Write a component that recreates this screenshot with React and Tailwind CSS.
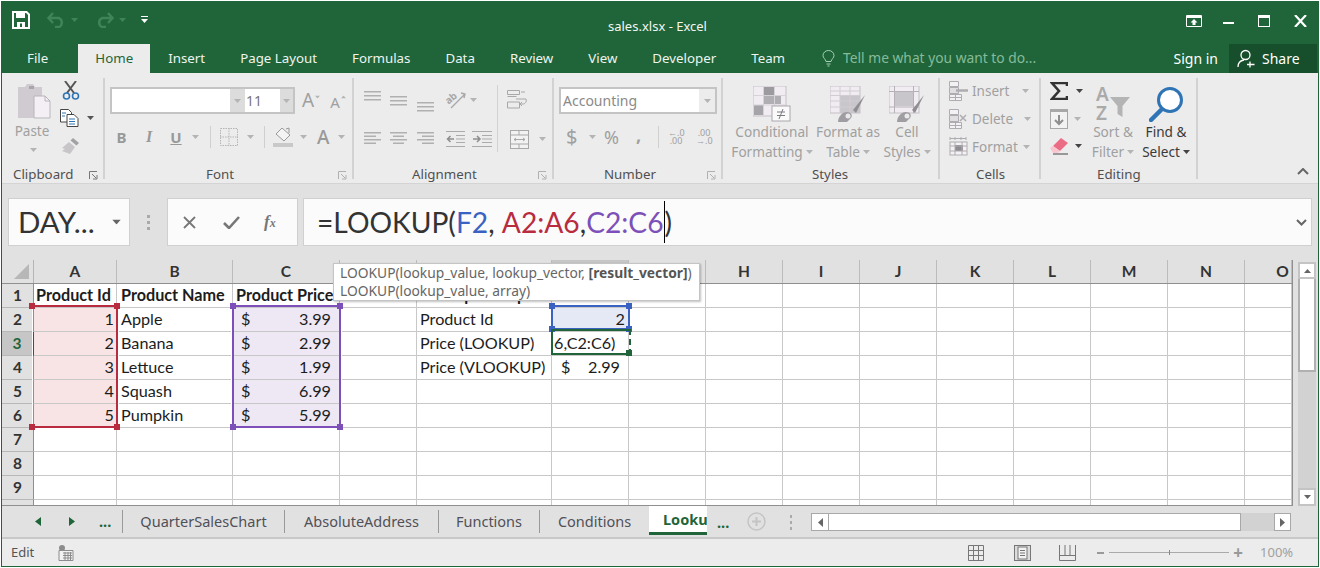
import React from "react";

const UI = { fontFamily: '"Noto Sans", "Open Sans", sans-serif' };
const SHEET = { fontFamily: 'Lato, "Liberation Sans", sans-serif' };

const ribbonTabs = ["Insert", "Page Layout", "Formulas", "Data", "Review", "View", "Developer", "Team"];
const columns = ["A", "B", "C", "D", "E", "F", "G", "H", "I", "J", "K", "L", "M", "N", "O"];
const gridCols = "grid grid-cols-[32px_83px_116px_107px_77px_135px_77px_77px_77px_77px_77px_77px_77px_77px_77px_47px]";

const products = [
  ["1", "Apple", "3.99"],
  ["2", "Banana", "2.99"],
  ["3", "Lettuce", "1.99"],
  ["4", "Squash", "6.99"],
  ["5", "Pumpkin", "5.99"],
];

function Caret({ color = "#b4b4b4", className = "" }) {
  return (
    <svg width="7" height="4" viewBox="0 0 7 4" className={className}>
      <path d="M0 0h7L3.500 4z" fill={color} />
    </svg>
  );
}

function Launcher({ dark }) {
  const c = dark ? "#777" : "#b0b0b0";
  return (
    <svg width="9" height="9" viewBox="0 0 9 9">
      <path d="M.5 8V.5H8" fill="none" stroke={c} />
      <path d="M3 3l4 4M8 4v4H4" fill="none" stroke={c} />
    </svg>
  );
}

function Lines({ w = 18, widths = [18, 18, 18], gap = 4, align = "left", color = "#a6a6a6" }) {
  return (
    <svg width={w} height={widths.length * gap + 2} viewBox={`0 0 ${w} ${widths.length * gap + 2}`}>
      {widths.map((lw, i) => {
        const x = align === "left" ? 0 : align === "right" ? w - lw : (w - lw) / 2;
        return <rect key={i} x={x} y={i * gap + 1} width={lw} height="1.500" fill={color} />;
      })}
    </svg>
  );
}

function Group({ width, label, labelClass, launcher, launcherDark, children }) {
  return (
    <div className={`flex shrink-0 ${width}`}>
      <div className="flex-1 min-w-0 flex flex-col">
        <div className="h-[89px] shrink-0">{children}</div>
        <div className={`h-[16px] shrink-0 flex items-center text-[13.300px] text-[#505050] ${labelClass}`}>
          <span>{label}</span>
          {launcher && (
            <span className="ml-auto mr-[5px] flex">
              <Launcher dark={launcherDark} />
            </span>
          )}
        </div>
      </div>
      <div className="w-[2px] h-[101px] bg-[#d2d2d2]" />
    </div>
  );
}

function BigButton({ width, icon, line1, line2, dark, caret = true }) {
  const color = dark ? "text-[#3a3a3a]" : "text-[#a0a0a0]";
  return (
    <div className={`${width} shrink-0 flex flex-col items-center`}>
      <div className="h-[42px] mt-[5px] flex items-center">{icon}</div>
      <div className={`text-[13.600px] leading-[20px] mt-[-3px] whitespace-nowrap ${color}`}>{line1}</div>
      <div className={`text-[13.600px] leading-[20px] whitespace-nowrap flex items-center gap-[3px] ${color}`}>
        {line2}
        {caret && <Caret color={dark ? "#444" : "#b4b4b4"} />}
      </div>
    </div>
  );
}

function CondFormatIcon() {
  return (
    <svg width="38" height="36" viewBox="0 0 38 36">
      <rect x="0" y="0" width="33" height="30" fill="#f1ecf2" stroke="#c4c0c6" />
      <rect x="10" y="1" width="11" height="8" fill="#9c9a9e" />
      <rect x="10" y="10" width="18" height="8" fill="#b0aeb2" />
      <rect x="1" y="19" width="10" height="10" fill="#a6a4a8" />
      <path d="M0 9.500h33M0 19h33M10.500 0v30M21.500 0v30" stroke="#d6d2d8" />
      <rect x="19" y="20" width="18" height="15" fill="#fbfafb" stroke="#a9a6ab" />
      <path d="M24 26h8M24 29.500h8M30 23l-4 10" stroke="#7c7a7e" fill="none" />
    </svg>
  );
}

function FormatTableIcon({ plain }) {
  return (
    <svg width="36" height="36" viewBox="0 0 36 36">
      <rect x="0" y="0" width="30" height="27" fill="#f1ecf2" stroke="#c4c0c6" />
      {plain ? (
        <>
          <rect x="6" y="6" width="18" height="14" fill="#c9c6cb" />
          <path d="M0 5.500h30M0 21h30M5.500 0v27M24.500 0v27" stroke="#b5b2b7" />
        </>
      ) : (
        <>
          <rect x="10" y="9" width="20" height="18" fill="#c9c6cb" />
          <path d="M0 5h30M0 9.500h30M0 15h30M0 21h30M10 0v27M20 0v27" stroke="#d0ccd2" />
        </>
      )}
      <path d="M35 9l-12 15 3 3z" fill="#8f8d91" />
      <path d="M8 36c0-5 4-10 9-10 4 0 6 3 4 6l-4 4z" fill="#9f9da1" />
      <circle cx="18" cy="30" r="2.500" fill="#e9e8ea" />
    </svg>
  );
}

function MiniTableIcon({ kind }) {
  return (
    <svg width="20" height="20" viewBox="0 0 20 20">
      <path d="M.5.500h9v5h-9zM.5 13.500h12v6h-12zM6.500 13.500v6M.5 16.500h12" fill="#f3f1f3" stroke="#aeacb0" />
      <path d="M.5 6.500h9v6h-9z" fill="#e0dee1" stroke="#aeacb0" />
      {kind === "insert" && <path d="M7 9.500h12" stroke="#aeacb0" strokeWidth="2.500" />}
      {kind === "delete" && <path d="M11 6l6 6M17 6l-6 6" stroke="#aeacb0" strokeWidth="1.500" />}
    </svg>
  );
}

function FormatCellsIcon() {
  return (
    <svg width="20" height="20" viewBox="0 0 20 20">
      <path d="M1 1.500h16M1 0v3M17 0v3M6 0v3M12 0v3" stroke="#aeacb0" fill="none" />
      <rect x="1" y="5" width="17" height="13" fill="#f3f1f3" stroke="#aeacb0" />
      <rect x="6" y="8" width="8" height="6" fill="#8e8c90" />
      <path d="M1 9h17M1 14h17M6 5v13M13 5v13" stroke="#aeacb0" />
    </svg>
  );
}

function TitleBar() {
  return (
    <div className="h-[42px] flex bg-[#1f6539] relative">
      <div className="flex items-start pt-[9px]">
        <svg width="18" height="18" viewBox="0 0 18 18" className="ml-[10px]">
          <path d="M1 1h13.500L17 3.500V17H1z" fill="none" stroke="#fff" strokeWidth="2" />
          <rect x="4" y="1" width="9" height="6" fill="#fff" />
          <rect x="5" y="11" width="8" height="6" fill="#fff" />
          <rect x="8" y="12.500" width="2" height="3.500" fill="#1f6539" />
        </svg>
        <svg width="19" height="16" viewBox="0 0 19 16" className="ml-[17px] mt-[1px]">
          <path d="M2 6h10a5 5 0 0 1 0 9H8M6 1L1.500 6 6 11" fill="none" stroke="#3f8359" strokeWidth="2.500" />
        </svg>
        <Caret color="#3f8359" className="ml-[5px] mt-[7px]" />
        <svg width="19" height="16" viewBox="0 0 19 16" className="ml-[17px] mt-[1px]">
          <path d="M17 6H7a5 5 0 0 0 0 9h4M13 1l4.500 5L13 11" fill="none" stroke="#3f8359" strokeWidth="2.500" />
        </svg>
        <Caret color="#3f8359" className="ml-[5px] mt-[7px]" />
        <svg width="7" height="7" viewBox="0 0 7 7" className="ml-[15px] mt-[5px]">
          <path d="M0 .500h7" stroke="#fff" />
          <path d="M0 3h7L3.500 7z" fill="#fff" />
        </svg>
      </div>
      <div className="absolute left-[606px] top-[14px] text-[13px] leading-[20px] text-[#f2f6f3]" style={UI}>
        sales.xlsx - Excel
      </div>
      <div className="ml-auto flex items-start pt-[13px] pr-[11px]">
        <svg width="16" height="12" viewBox="0 0 16 12">
          <path d="M.500 .500h15v11H.500z" fill="none" stroke="#fff" />
          <path d="M1 1h14v2H1zM8 4l3.500 3.500H9.500V10h-3V7.500H4.500z" fill="#fff" />
        </svg>
        <div className="w-[11px] h-[2px] bg-white ml-[21px] mt-[7px]" />
        <div className="w-[12px] h-[12px] border border-white border-t-[3px] ml-[24px]" />
        <svg width="13" height="12" viewBox="0 0 13 12" className="ml-[24px]">
          <path d="M1 0l11 12M12 0L1 12" stroke="#fff" strokeWidth="2.200" />
        </svg>
      </div>
    </div>
  );
}

function TabRow() {
  return (
    <div className="h-[29px] flex items-stretch bg-[#1f6539] text-[13.300px] text-[#eef4f0]" style={UI}>
      <div className="ml-[25px] mr-[30px] flex items-center">File</div>
      <div className="w-[72px] bg-[#ececec] text-[#1f6539] flex items-center justify-center">Home</div>
      <div className="flex ml-[18px] gap-[35px]">
        {ribbonTabs.map((t) => (
          <div key={t} className="flex items-center">{t}</div>
        ))}
      </div>
      <div className="flex items-center ml-[37px] text-[#86bb9a] text-[13.800px]">
        <svg width="13" height="17" viewBox="0 0 13 17" className="mr-[8px]">
          <path d="M4 11.500C3.500 9 1 8 1 5.500a5.500 5 0 0 1 11 0c0 2.500-2.500 3.500-3 6zM4.500 14h4M5.500 16h2" fill="none" stroke="#a9d0b8" />
        </svg>
        Tell me what you want to do...
      </div>
      <div className="ml-auto flex items-stretch">
        <div className="flex items-center mr-[11px] text-white text-[14px]">Sign in</div>
        <div className="w-[88px] bg-[#174f2c] flex items-center pl-[8px] text-white mr-px text-[14px]">
          <svg width="19" height="19" viewBox="0 0 19 19" className="mr-[6px]">
            <circle cx="8.500" cy="6" r="4.500" fill="none" stroke="#fff" strokeWidth="1.300" />
            <path d="M1 18c0-4 2.500-6.500 6-7M13 12.500v6M10 15.500h7.500" fill="none" stroke="#fff" strokeWidth="1.300" />
          </svg>
          Share
        </div>
      </div>
    </div>
  );
}

function Ribbon() {
  return (
    <div className="h-[111px] bg-[#ececec] flex pt-[5px] border-b border-[#d4d4d4]" style={UI}>
      <Group width="w-[103px]" label="Clipboard" labelClass="pl-[11px]" launcher launcherDark>
        <div className="flex">
          <div className="ml-[13px] w-[37px] flex flex-col items-center">
            <svg width="34" height="36" viewBox="0 0 34 36" className="mt-[5px]">
              <path d="M1 4h7l2-3h6l2 3h7v31H1z" fill="#cfcbd0" />
              <rect x="12" y="3" width="5" height="3" fill="#a9a6ab" />
              <path d="M17 13h11l5 5v17H17z" fill="#f4eff5" stroke="#b8b5ba" />
              <path d="M28 13v5h5" fill="none" stroke="#b8b5ba" />
            </svg>
            <div className="text-[13.500px] leading-[20px] text-[#a0a0a0] mt-[2px] -ml-[3px]">Paste</div>
            <Caret className="mt-[7px]" />
          </div>
          <div className="ml-[8px] flex flex-col">
            <svg width="18" height="19" viewBox="0 0 18 19" className="mt-[3px] ml-[2px]">
              <path d="M3 0l9 12M14 0L5 12" stroke="#555" strokeWidth="2" />
              <circle cx="4.500" cy="15" r="3" fill="none" stroke="#2f75b5" strokeWidth="1.600" />
              <circle cx="13.500" cy="15" r="3" fill="none" stroke="#2f75b5" strokeWidth="1.600" />
            </svg>
            <div className="flex items-center mt-[9px]">
              <svg width="19" height="18" viewBox="0 0 19 18">
                <path d="M.500 .500h8l3 3V13H.500z" fill="#fff" stroke="#444" />
                <path d="M7 5.500h7l4 4v8H7z" fill="#fff" stroke="#444" />
                <path d="M2 4h4M2 7h3M9 10h6M9 12.500h6M9 15h6" stroke="#2f75b5" />
              </svg>
              <Caret color="#555" className="ml-[8px]" />
            </div>
            <svg width="19" height="18" viewBox="0 0 19 18" className="mt-[10px] ml-[1px]">
              <path d="M12 1l6 5-2.500 2.500-6-5z" fill="#a4a1a5" />
              <path d="M8 5l6 5-5 7-8-3 3-2-3-1z" fill="#c8c5c9" />
            </svg>
          </div>
        </div>
      </Group>

      <Group width="w-[249px]" label="Font" labelClass="pl-[101px]" launcher>
        <div className="flex mt-[9px] items-stretch">
          <div className="ml-[5px] w-[185px] h-[27px] border-2 border-[#c4c4c4] flex text-[14px]">
            <div className="w-[118px] bg-white" />
            <div className="w-[15px] bg-[#dcdcdc] flex items-center justify-center"><Caret /></div>
            <div className="w-[35px] bg-white text-[#777] pl-[1px] leading-[23px]">11</div>
            <div className="flex-1 bg-[#dcdcdc] flex items-center justify-center"><Caret /></div>
          </div>
          <div className="ml-[7px] flex items-center">
            <span className="text-[19px] text-[#a0a0a0] leading-none">A</span>
            <Caret className="mb-[8px] scale-75" />
            <span className="text-[15px] text-[#a0a0a0] leading-none ml-[9px] mt-[3px]">A</span>
            <Caret className="mb-[8px] rotate-180 scale-75" />
          </div>
        </div>
        <div className="flex items-center h-[22px] mt-[12px] ml-[3px] text-[#999]">
          <div className="w-[27px] text-center text-[15px] font-bold">B</div>
          <div className="w-[28px] text-center text-[16px] font-bold italic" style={{ fontFamily: '"Liberation Serif", serif' }}>I</div>
          <div className="w-[26px] text-center text-[15px] font-bold underline">U</div>
          <div className="w-[12px] flex justify-center"><Caret /></div>
          <div className="w-[1px] h-[22px] bg-[#cfcfcf] ml-[9px]" />
          <svg width="18" height="18" viewBox="0 0 18 18" className="ml-[9px]">
            <rect x=".5" y=".5" width="17" height="17" fill="none" stroke="#b5b5b5" strokeDasharray="1.500 1" />
            <path d="M9 0v18M0 9h18" stroke="#b5b5b5" strokeDasharray="1.500 1" />
          </svg>
          <Caret className="ml-[9px]" />
          <div className="w-[1px] h-[22px] bg-[#cfcfcf] ml-[10px]" />
          <svg width="20" height="20" viewBox="0 0 20 20" className="ml-[8px]">
            <path d="M9 1l8 7-6 6-8-7z" fill="#f4f4f4" stroke="#999" />
            <path d="M13 2l3-1v5" fill="none" stroke="#999" />
            <rect x="0" y="16" width="20" height="4" fill="#c9c9c9" />
          </svg>
          <Caret className="ml-[7px]" />
          <div className="ml-[10px] text-[19px] leading-none font-medium">A</div>
          <Caret className="ml-[9px]" />
        </div>
      </Group>

      <Group width="w-[200px]" label="Alignment" labelClass="pl-[58px]" launcher>
        <div className="flex h-[42px]">
          <div className="ml-[10px] mt-[12px]"><Lines widths={[17, 17, 17]} gap={4} color="#b0b0b0" w={17} /></div>
          <div className="ml-[9px] mt-[17px]"><Lines widths={[17, 17, 17]} gap={4} color="#b0b0b0" w={17} /></div>
          <div className="ml-[10px] mt-[23px]"><Lines widths={[17, 17, 17]} gap={4} color="#b0b0b0" w={17} /></div>
          <svg width="20" height="19" viewBox="0 0 20 19" className="ml-[12px] mt-[12px] overflow-visible">
            <path d="M5 18L19 4M15 3l4 1-1 4" fill="none" stroke="#a8a8a8" strokeWidth="1.400" />
            <text x="0" y="12" fontSize="10" fontWeight="700" fill="#a8a8a8" transform="rotate(-40 5 10)">ab</text>
          </svg>
          <Caret className="ml-[4px] mt-[20px]" />
          <div className="w-[1px] h-[67px] bg-[#d2d2d2] ml-[20px] mt-[7px]" />
          <svg width="20" height="19" viewBox="0 0 20 19" className="ml-[9px] mt-[12px]">
            <path d="M.5 .5h12v4H.5zM.5 12h12v6H.5zM.5 6.500h9" fill="none" stroke="#a8a8a8" />
            <path d="M14 2h4M9 9h10c1 3-1 5-3 5h-2M15 12l-2 2 2 2" fill="none" stroke="#a8a8a8" />
          </svg>
        </div>
        <div className="flex items-center mt-[8px] h-[22px]">
          <div className="ml-[10px]"><Lines widths={[17, 12, 17, 12]} gap={3.500} w={17} color="#b0b0b0" /></div>
          <div className="ml-[9px]"><Lines widths={[17, 11, 17, 11]} gap={3.500} w={17} align="center" color="#b0b0b0" /></div>
          <div className="ml-[10px]"><Lines widths={[17, 12, 17, 12]} gap={3.500} w={17} align="right" color="#b0b0b0" /></div>
          <svg width="19" height="16" viewBox="0 0 19 16" className="ml-[12px]">
            <path d="M0 .5h19M0 15.500h19M10 4.500h9M10 8h9M10 11.500h9" stroke="#ababab" />
            <path d="M8 8H2M4.500 5L1.500 8l3 3" fill="none" stroke="#8e8e8e" strokeWidth="1.500" />
          </svg>
          <svg width="20" height="16" viewBox="0 0 20 16" className="ml-[7px]">
            <path d="M0 .5h20M0 15.500h20M10 4.500h10M10 8h10M10 11.500h10" stroke="#ababab" />
            <path d="M1 8h6M5 5l3 3-3 3" fill="none" stroke="#8e8e8e" strokeWidth="1.500" />
          </svg>
          <svg width="19" height="19" viewBox="0 0 19 19" className="ml-[18px]">
            <rect x=".5" y=".5" width="18" height="18" fill="#f2f2f2" stroke="#a8a8a8" />
            <path d="M0 5h19M0 14h19M9 0v5M9 14v5" stroke="#a8a8a8" />
            <path d="M4 9.500h11M6 8l-2 1.500L6 11M13 8l2 1.500-2 1.500" fill="none" stroke="#a8a8a8" />
          </svg>
          <Caret className="ml-[10px]" />
        </div>
      </Group>

      <Group width="w-[169px]" label="Number" labelClass="pl-[50px]" launcher>
        <div className="ml-[5px] mt-[9px] w-[158px] h-[27px] border-2 border-[#c4c4c4] bg-white flex text-[14px]">
          <div className="flex-1 text-[#8a8a8a] pl-[2px] leading-[23px]">Accounting</div>
          <div className="w-[16px] bg-[#ececec] flex items-center justify-center"><Caret /></div>
        </div>
        <div className="flex items-center h-[22px] mt-[12px] text-[#a0a0a0]">
          <div className="ml-[12px] w-[11px] text-[20px] leading-none">$</div>
          <Caret className="ml-[12px]" />
          <div className="ml-[8px] w-[17px] text-[18px] leading-none">%</div>
          <div className="ml-[15px] w-[5px] text-[18px] font-bold leading-none mb-[4px]">,</div>
          <div className="w-[1px] h-[22px] bg-[#cfcfcf] ml-[17px]" />
          <div className="ml-[9px] w-[16px] text-[9px] leading-[8px] text-center whitespace-nowrap">←.0<br />.00</div>
          <div className="ml-[12px] w-[16px] text-[9px] leading-[8px] text-center whitespace-nowrap">.00<br />→.0</div>
        </div>
      </Group>

      <Group width="w-[217px]" label="Styles" labelClass="pl-[89px]">
        <div className="flex pl-[6px]">
          <BigButton width="w-[86px]" icon={<CondFormatIcon />} line1="Conditional" line2="Formatting" />
          <BigButton width="w-[66px]" icon={<FormatTableIcon />} line1="Format as" line2="Table" />
          <BigButton width="w-[52px]" icon={<FormatTableIcon plain />} line1="Cell" line2="Styles" />
        </div>
      </Group>

      <Group width="w-[101px]" label="Cells" labelClass="pl-[36px]">
        <div className="flex flex-col pl-[9px] -mt-px text-[13.500px] text-[#a0a0a0]">
          <div className="h-[28px] flex items-center">
            <MiniTableIcon kind="insert" />
            <span className="ml-[3px]">Insert</span>
            <Caret className="ml-[13px]" />
          </div>
          <div className="h-[28px] flex items-center">
            <MiniTableIcon kind="delete" />
            <span className="ml-[3px]">Delete</span>
            <Caret className="ml-[11px]" />
          </div>
          <div className="h-[28px] flex items-center">
            <FormatCellsIcon />
            <span className="ml-[3px]">Format</span>
            <Caret className="ml-[5px]" />
          </div>
        </div>
      </Group>

      <Group width="w-[157px]" label="Editing" labelClass="pl-[56px]">
        <div className="flex">
          <div className="ml-[9px] flex flex-col">
            <div className="flex items-center mt-[3px] h-[20px]">
              <svg width="18" height="18" viewBox="0 0 18 18">
                <path d="M17 4V1H2l7 8-7 8h15v-3" fill="none" stroke="#333" strokeWidth="2.600" />
              </svg>
              <Caret color="#444" className="ml-[8px]" />
            </div>
            <div className="flex items-center mt-[7px] h-[21px]">
              <svg width="18" height="20" viewBox="0 0 18 20">
                <rect x=".5" y=".5" width="17" height="19" fill="#f2f2f2" stroke="#a8a8a8" />
                <rect x="0" y="0" width="18" height="3" fill="#a8a8a8" />
                <path d="M9 6v9M5 11l4 4 4-4" fill="none" stroke="#8e8e8e" strokeWidth="2" />
              </svg>
              <Caret className="ml-[6px]" />
            </div>
            <div className="flex items-center mt-[8px] h-[18px]">
              <svg width="19" height="17" viewBox="0 0 19 17">
                <path d="M11 0l7 5-8 8-7-5z" fill="#eb6d85" />
                <path d="M0 10l3-2 7 5-2 2H3z" fill="#f7c6cf" />
                <path d="M3 16h15" stroke="#444" />
              </svg>
              <Caret color="#444" className="ml-[6px]" />
            </div>
          </div>
          <BigButton
            width="w-[56px] ml-[2px]"
            icon={
              <svg width="36" height="36" viewBox="0 0 36 36" className="overflow-visible">
                <text x="1" y="15" fontSize="19" fontWeight="600" fill="#aaa">A</text>
                <text x="1" y="34" fontSize="19" fontWeight="600" fill="#aaa">Z</text>
                <path d="M15 11h20l-7.500 9v11l-5-3v-8z" fill="#b4b4b4" />
              </svg>
            }
            line1="Sort &"
            line2="Filter"
          />
          <BigButton
            width="w-[50px]"
            dark
            icon={
              <svg width="35" height="36" viewBox="0 0 35 36">
                <circle cx="21" cy="14" r="11.500" fill="#fff" stroke="#2f75b5" strokeWidth="3" />
                <path d="M12 24L2 34" stroke="#2f75b5" strokeWidth="4.500" strokeLinecap="round" />
              </svg>
            }
            line1="Find &"
            line2="Select"
          />
        </div>
      </Group>

      <div className="flex-1 flex justify-end items-end pr-[9px] pb-[8px]">
        <svg width="12" height="7" viewBox="0 0 12 7">
          <path d="M1 6l5-5 5 5" fill="none" stroke="#666" strokeWidth="2" />
        </svg>
      </div>
    </div>
  );
}

function FormulaBar() {
  return (
    <div className="h-[76px] bg-[#e1e1e1] flex pt-[14px] pl-[6px] pr-[6px]">
      <div className="w-[122px] h-[48px] bg-[#fbfbfb] border-[1.500px] border-[#d0d0d0] flex items-center pl-[9px] text-[29.500px] text-[#333]" style={SHEET}>
        DAY...
        <Caret color="#666" className="ml-auto mr-[9px] scale-125" />
      </div>
      <div className="w-[37px] h-[48px] flex flex-col items-center justify-center gap-[3px]">
        <div className="w-[3px] h-[3px] bg-[#aaa]" />
        <div className="w-[3px] h-[3px] bg-[#aaa]" />
        <div className="w-[3px] h-[3px] bg-[#aaa]" />
      </div>
      <div className="w-[131px] h-[48px] bg-[#fbfbfb] border-[1.500px] border-[#d0d0d0] flex items-center pl-[15px]">
        <svg width="13" height="13" viewBox="0 0 13 13">
          <path d="M1 1l11 11M12 1L1 12" stroke="#777" strokeWidth="1.800" />
        </svg>
        <svg width="17" height="13" viewBox="0 0 17 13" className="ml-[27px]">
          <path d="M1 7l5 5L16 1" fill="none" stroke="#777" strokeWidth="2.600" />
        </svg>
        <span className="ml-[24px] text-[17px] font-bold italic text-[#777]" style={{ fontFamily: '"Liberation Serif", serif' }}>
          f<span className="text-[12px]">x</span>
        </span>
      </div>
      <div className="ml-[5px] flex-1 h-[48px] bg-[#fbfbfb] border-[1.500px] border-[#d0d0d0] flex items-center pl-[13px] text-[28.200px] text-[#333] whitespace-nowrap" style={SHEET}>
        <span>=LOOKUP(</span>
        <span className="text-[#3a62c2]">F2</span>
        <span>,&nbsp;</span>
        <span className="text-[#b92b3e]">A2:A6</span>
        <span>,</span>
        <span className="text-[#7c50b8]">C2:C6</span>
        <span className="inline-block w-px h-[42px] bg-black" />
        <span>)</span>
        <svg width="11" height="7" viewBox="0 0 11 7" className="ml-auto mr-[4px]">
          <path d="M1 1l4.500 4.500L10 1" fill="none" stroke="#666" strokeWidth="2" />
        </svg>
      </div>
    </div>
  );
}

function Cell({ className = "", children }) {
  return (
    <div className={`h-[24px] border-r border-b border-[#c8c8c8] flex items-center whitespace-nowrap overflow-hidden text-[16.200px] text-[#1c1c1c] ${className}`}>
      {children}
    </div>
  );
}

function RowHead({ n, active }) {
  return (
    <div className={`h-[24px] border-b border-r border-b-[#b8b8b8] flex items-center justify-center font-bold text-[15.500px] ${active ? "bg-[#c6c6c6] text-[#1f6539] border-r-2 border-r-[#1f6539]" : "bg-[#e1e1e1] text-[#333] border-r-[#8f8f8f]"}`}>
      {n}
    </div>
  );
}

function Money({ value }) {
  return (
    <div className="w-full flex justify-between pl-[8px] pr-[8px]">
      <span>$</span>
      <span>{value}</span>
    </div>
  );
}

function Handle({ color, className }) {
  return <div className={`absolute w-[6px] h-[6px] ${className}`} style={{ backgroundColor: color }} />;
}

function Range({ className, color }) {
  return (
    <div className={`absolute border-2 shadow-[0_0_0_1px_#fff] ${className}`} style={{ borderColor: color }}>
      <Handle color={color} className="-left-[4px] -top-[4px]" />
      <Handle color={color} className="-right-[4px] -top-[4px]" />
      <Handle color={color} className="-left-[4px] -bottom-[4px]" />
      <Handle color={color} className="-right-[4px] -bottom-[4px]" />
    </div>
  );
}

function Grid() {
  const rows = [1, 2, 3, 4, 5, 6, 7, 8, 9, 10];
  return (
    <div className="h-[246px] bg-[#e1e1e1] flex" style={SHEET}>
      <div className="w-[1291px] relative overflow-hidden border-r border-b border-[#8f8f8f]">
        <div className={`${gridCols} h-[24px] border-b border-[#8f8f8f]`}>
          <div className="border-r border-[#b5b5b5] flex items-end justify-end pr-[4px] pb-[4px]">
            <svg width="15" height="15" viewBox="0 0 15 15"><path d="M15 0v15H0z" fill="#b7b7b7" /></svg>
          </div>
          {columns.map((c) => (
            <div
              key={c}
              className={`border-r border-[#bcbcbc] flex items-center justify-center font-bold text-[15.500px] text-[#333] ${c === "F" ? "bg-[#c6c6c6]" : ""} ${c === "O" ? "pl-[29px]" : ""}`}
            >
              {c}
            </div>
          ))}
        </div>
        {rows.map((r) => {
          const p = products[r - 2];
          return (
            <div key={r} className={gridCols}>
              <RowHead n={r < 10 ? r : ""} active={r === 3} />
              <Cell className={`${p ? "bg-[#f8e4e4]" : "bg-white"} ${r === 1 ? "font-bold pl-[2px]" : "justify-end pr-[2px]"}`}>
                {r === 1 ? "Product Id" : p && p[0]}
              </Cell>
              <Cell className={`bg-white pl-[4px] ${r === 1 ? "font-bold" : ""}`}>
                {r === 1 ? "Product Name" : p && p[1]}
              </Cell>
              <Cell className={`${p ? "bg-[#eee8f5]" : "bg-white"} ${r === 1 ? "font-bold pl-[3px]" : ""}`}>
                {r === 1 ? "Product Price" : p && <Money value={p[2]} />}
              </Cell>
              <Cell className="bg-white" />
              <Cell className={`bg-white pl-[3px] ${r === 1 ? "font-bold" : ""}`}>
                {r === 1 && "Lookup Example"}
                {r === 2 && "Product Id"}
                {r === 3 && "Price (LOOKUP)"}
                {r === 4 && "Price (VLOOKUP)"}
              </Cell>
              <Cell className={`${r === 2 ? "bg-[#e4e9f5] justify-end pr-[3px]" : "bg-white"} ${r === 3 ? "pl-[2px]" : ""}`}>
                {r === 2 && "2"}
                {r === 3 && "6,C2:C6)"}
                {r === 4 && (
                  <div className="w-full flex justify-between pl-[9px] pr-[8px]">
                    <span>$</span>
                    <span>2.99</span>
                  </div>
                )}
              </Cell>
              {columns.slice(6).map((c) => (
                <Cell key={c} className="bg-white" />
              ))}
            </div>
          );
        })}

        <Range className="left-[31px] top-[45px] w-[85px] h-[123px] border-l-0" color="#b92b3e" />
        <Range className="left-[230px] top-[45px] w-[109px] h-[123px]" color="#7c50b8" />
        <Range className="left-[549px] top-[45px] w-[79px] h-[25px]" color="#3a62c2" />
        <div className="absolute left-[549px] top-[69px] w-[80px] h-[26px] border-2 border-t-[#1f6539] border-[#1f6539] [border-right-style:dashed]">
          <div className="absolute -right-[3px] -bottom-[3px] w-[6px] h-[6px] bg-[#1f6539]" />
        </div>

        <div className="absolute left-[331px] top-[3px] w-[367px] h-[38px] bg-white border border-[#c4c4c4] shadow-[1px_1px_2px_rgba(0,0,0,0.25)] pl-[6px] text-[13.800px] leading-[18px] text-[#666] whitespace-nowrap" style={UI}>
          <div>LOOKUP(lookup_value, lookup_vector, <b className="text-[#555]">[result_vector]</b>)</div>
          <div>LOOKUP(lookup_value, array)</div>
        </div>
      </div>

      <div className="ml-[5px] w-[18px] mt-[2px] mr-[2px] flex flex-col bg-[#d2d2d2]">
        <div className="h-[17px] bg-white border-2 border-[#c4c4c4] flex items-center justify-center">
          <Caret color="#666" className="rotate-180" />
        </div>
        <div className="h-[93px] bg-white border-2 border-t-0 border-[#b0b0b0]" />
        <div className="flex-1" />
        <div className="h-[18px] bg-white border-2 border-[#c4c4c4] flex items-center justify-center">
          <Caret color="#666" />
        </div>
      </div>
    </div>
  );
}

function SheetTabs() {
  const tabs = [
    ["QuarterSalesChart", "w-[161px]"],
    ["AbsoluteAddress", "w-[153px]"],
    ["Functions", "w-[100px]"],
    ["Conditions", "w-[109px]"],
  ];
  return (
    <div className="h-[33px] bg-[#e1e1e1] flex border-b-2 border-[#c8c8c8] text-[14.500px] text-[#505058]" style={UI}>
      <div className="flex items-center">
        <svg width="6" height="9" viewBox="0 0 6 9" className="ml-[33px]"><path d="M6 0v9L0 4.500z" fill="#1f6539" /></svg>
        <svg width="6" height="9" viewBox="0 0 6 9" className="ml-[28px]"><path d="M0 0v9l6-4.500z" fill="#1f6539" /></svg>
        <span className="ml-[24px] w-[15px] font-bold text-[#1f6539] leading-none">...</span>
      </div>
      <div className="w-px h-[23px] bg-[#999] ml-[8px] mt-[4px]" />
      {tabs.map(([t, w], i) => (
        <React.Fragment key={t}>
          <div className={`flex items-center justify-center h-[31px] whitespace-nowrap ${w}`}>{t}</div>
          {i < tabs.length - 1 && <div className="w-px h-[23px] bg-[#999] mt-[4px]" />}
        </React.Fragment>
      ))}
      <div className="w-[58px] h-[30px] bg-white pl-[14px] pt-[2px] -mt-[1px] border-b-[3px] border-[#1f6539] overflow-hidden flex items-center font-bold text-[#1f6539]">
        Lookup
      </div>
      <span className="ml-[10px] mt-[9px] w-[15px] font-bold text-[#1f6539] leading-none">...</span>
      <svg width="19" height="19" viewBox="0 0 19 19" className="ml-[15px] mt-[6px]">
        <circle cx="9.500" cy="9.500" r="8.500" fill="none" stroke="#c4c4c4" strokeWidth="1.500" />
        <path d="M9.500 5v9M5 9.500h9" stroke="#c4c4c4" strokeWidth="2" />
      </svg>
      <div className="ml-[24px] mt-[9px] flex flex-col gap-[3px]">
        <div className="w-[2px] h-[3px] bg-[#aaa]" />
        <div className="w-[2px] h-[3px] bg-[#aaa]" />
        <div className="w-[2px] h-[3px] bg-[#aaa]" />
      </div>
      <div className="ml-[19px] mt-[7px] w-[480px] h-[18px] flex">
        <div className="w-[18px] bg-white border border-[#a8a8a8] flex items-center justify-center">
          <svg width="5" height="9" viewBox="0 0 5 9"><path d="M5 0v9L0 4.500z" fill="#666" /></svg>
        </div>
        <div className="w-[412px] bg-white border-y border-r border-[#a8a8a8]" />
        <div className="w-[33px] bg-[#d2d2d2]" />
        <div className="w-[17px] bg-white border border-[#a8a8a8] flex items-center justify-center">
          <svg width="5" height="9" viewBox="0 0 5 9"><path d="M0 0v9l5-4.500z" fill="#666" /></svg>
        </div>
      </div>
    </div>
  );
}

function StatusBar() {
  return (
    <div className="h-[27px] bg-[#ececec] flex items-center text-[13px] text-[#555]" style={UI}>
      <span className="ml-[9px]">Edit</span>
      <svg width="16" height="16" viewBox="0 0 16 16" className="ml-[24px]">
        <circle cx="4" cy="3" r="3" fill="#8c8c8c" />
        <path d="M1 5.500h14v10H1z" fill="#f2f2f2" stroke="#8c8c8c" />
        <path d="M5 8h9M5 10.500h9M5 13h9M7 7v8M10 7v8M12.500 7v8" stroke="#8c8c8c" />
      </svg>
      <svg width="16" height="16" viewBox="0 0 16 16" className="ml-[894px]">
        <path d="M.5.500h15v15H.5zM.5 5.500h15M.5 10.500h15M5.500.500v15M10.500.500v15" fill="none" stroke="#777" />
      </svg>
      <svg width="17" height="16" viewBox="0 0 17 16" className="ml-[30px]">
        <rect x=".5" y=".5" width="16" height="15" fill="#dcdcdc" stroke="#777" />
        <rect x="4" y="2" width="9" height="12" fill="#f2f2f2" stroke="#777" />
        <path d="M6 5.500h5M6 8h5M6 10.500h5" stroke="#777" />
      </svg>
      <svg width="17" height="16" viewBox="0 0 17 16" className="ml-[28px]">
        <path d="M.5 0v15.500h16V0M.5 10.500h16M6 0v10M11 0v10" fill="none" stroke="#777" />
      </svg>
      <div className="w-[7px] h-[2px] bg-[#999] ml-[21px]" />
      <div className="w-[120px] h-px bg-[#aaa] ml-[5px] flex justify-center items-center">
        <div className="w-px h-[5px] bg-[#888]" />
      </div>
      <span className="ml-[4px] text-[17px] font-bold text-[#999] leading-none">+</span>
      <span className="ml-[17px] text-[13px] text-[#a0a0a0]">100%</span>
    </div>
  );
}

export default function App() {
  return (
    <div className="w-[1320px] h-[568px] bg-white pt-px pl-px overflow-hidden">
      <div className="w-[1318px] h-[566px] border border-[#1f6539] flex flex-col overflow-hidden">
        <TitleBar />
        <TabRow />
        <Ribbon />
        <FormulaBar />
        <Grid />
        <SheetTabs />
        <StatusBar />
      </div>
    </div>
  );
}
